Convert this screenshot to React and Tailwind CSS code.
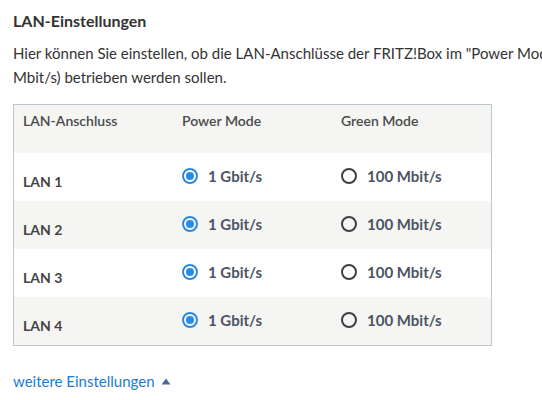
import React from "react";

function RadioOn() {
  return (
    <span className="inline-flex w-[16px] h-[16px] rounded-full border-2 border-[#2b8ae2] items-center justify-center shrink-0">
      <span className="w-[8px] h-[8px] rounded-full bg-[#2b8ae2]" />
    </span>
  );
}

function RadioOff() {
  return <span className="inline-block w-[16px] h-[16px] rounded-full border-2 border-[#3d4046] shrink-0" />;
}

const rows = ["LAN 1", "LAN 2", "LAN 3", "LAN 4"];

export default function App() {
  return (
    <div className="w-[542px] h-[400px] overflow-hidden bg-white text-[#3a3a3a] font-['Lato','Liberation_Sans',sans-serif] px-[13px] pt-[11px]">
      <h1 className="text-[16px] font-bold leading-[20px] text-[#333]">LAN-Einstellungen</h1>
      <p className="mt-[10px] text-[15px] leading-[24px] whitespace-nowrap text-[#333]">
        Hier können Sie einstellen, ob die LAN-Anschlüsse der FRITZ!Box im "Power Mode" (1 Gbit/s) oder im "Green Mode" (100
        <br />
        Mbit/s) betrieben werden sollen.
      </p>
      <div className="mt-[15px] w-[479px] border border-[#bcc7d0]">
        <div className="grid grid-cols-3 h-[48px] bg-[#f5f5f3] text-[14px] font-semibold text-[#4a4a4a]">
          <div className="pl-[9px] pt-[6px] leading-[20px]">LAN-Anschluss</div>
          <div className="pl-[9px] pt-[6px] leading-[20px]">Power Mode</div>
          <div className="pl-[9px] pt-[6px] leading-[20px]">Green Mode</div>
        </div>
        {rows.map((r, i) => (
          <div key={r} className={`grid grid-cols-3 h-[48px] ${i % 2 === 1 ? "bg-[#f5f5f3]" : "bg-white"}`}>
            <div className="pl-[9px] pt-[19px] leading-[20px] text-[14px] font-bold text-[#444]">{r}</div>
            <div className="pl-[9px] flex items-center gap-[10px] pb-[2px]">
              <RadioOn />
              <span className="text-[15px] font-bold text-[#4c5463]">1 Gbit/s</span>
            </div>
            <div className="pl-[9px] flex items-center gap-[10px] pb-[2px]">
              <RadioOff />
              <span className="text-[15px] font-bold text-[#4c5463]">100 Mbit/s</span>
            </div>
          </div>
        ))}
      </div>
      <div className="mt-[25px] flex items-center gap-[6px] text-[15px] leading-[20px] text-[#1d7bd5]">
        <span>weitere Einstellungen</span>
        <svg width="10" height="7" viewBox="0 0 10 7"><path d="M5 0.5 L9.5 6.5 L0.5 6.5 Z" fill="#4d6a92" /></svg>
      </div>
    </div>
  );
}
